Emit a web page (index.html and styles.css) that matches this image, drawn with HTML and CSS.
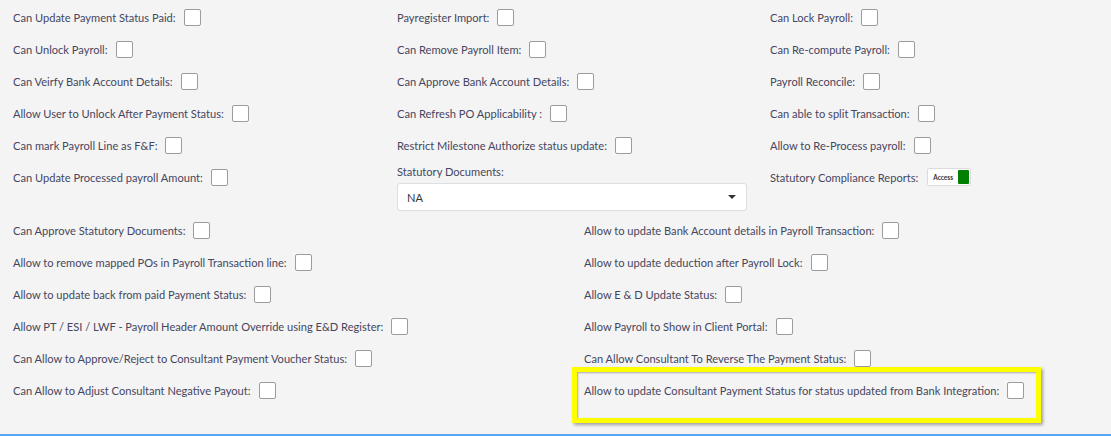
FILE: index.html
```html
<!DOCTYPE html>
<html lang="en">
  <head>
    <meta charset="UTF-8" />
    <meta name="viewport" content="width=device-width, initial-scale=1.0" />
    <title>Payroll Permissions</title>
    <link rel="stylesheet" href="styles.css">
  </head>
  <body>
    <div class="panel">
      <div class="grid3">
        <div class="field"><label>Can Update Payment Status Paid:</label><span class="chk"></span></div>
        <div class="field"><label>Payregister Import:</label><span class="chk"></span></div>
        <div class="field"><label>Can Lock Payroll:</label><span class="chk"></span></div>

        <div class="field"><label>Can Unlock Payroll:</label><span class="chk"></span></div>
        <div class="field"><label>Can Remove Payroll Item:</label><span class="chk"></span></div>
        <div class="field"><label>Can Re-compute Payroll:</label><span class="chk"></span></div>

        <div class="field"><label>Can Veirfy Bank Account Details:</label><span class="chk"></span></div>
        <div class="field"><label>Can Approve Bank Account Details:</label><span class="chk"></span></div>
        <div class="field"><label>Payroll Reconcile:</label><span class="chk"></span></div>

        <div class="field"><label>Allow User to Unlock After Payment Status:</label><span class="chk"></span></div>
        <div class="field"><label>Can Refresh PO Applicability :</label><span class="chk"></span></div>
        <div class="field"><label>Can able to split Transaction:</label><span class="chk"></span></div>

        <div class="field"><label>Can mark Payroll Line as F&amp;F:</label><span class="chk"></span></div>
        <div class="field"><label>Restrict Milestone Authorize status update:</label><span class="chk"></span></div>
        <div class="field"><label>Allow to Re-Process payroll:</label><span class="chk"></span></div>

        <div class="field"><label>Can Update Processed payroll Amount:</label><span class="chk"></span></div>
        <div class="select-field">
          <label>Statutory Documents:</label>
          <div class="select"><span>NA</span><span class="caret"></span></div>
        </div>
        <div class="field">
          <label>Statutory Compliance Reports:</label>
          <span class="toggle"><span class="toggle-text">Access</span><span class="toggle-knob"></span></span>
        </div>
      </div>

      <div class="grid2">
        <div class="field"><label>Can Approve Statutory Documents:</label><span class="chk"></span></div>
        <div class="field"><label>Allow to update Bank Account details in Payroll Transaction:</label><span class="chk"></span></div>

        <div class="field"><label>Allow to remove mapped POs in Payroll Transaction line:</label><span class="chk"></span></div>
        <div class="field"><label>Allow to update deduction after Payroll Lock:</label><span class="chk"></span></div>

        <div class="field"><label>Allow to update back from paid Payment Status:</label><span class="chk"></span></div>
        <div class="field"><label>Allow E &amp; D Update Status:</label><span class="chk"></span></div>

        <div class="field"><label>Allow PT / ESI / LWF - Payroll Header Amount Override using E&amp;D Register:</label><span class="chk"></span></div>
        <div class="field"><label>Allow Payroll to Show in Client Portal:</label><span class="chk"></span></div>

        <div class="field"><label>Can Allow to Approve/Reject to Consultant Payment Voucher Status:</label><span class="chk"></span></div>
        <div class="field"><label>Can Allow Consultant To Reverse The Payment Status:</label><span class="chk"></span></div>

        <div class="field"><label>Can Allow to Adjust Consultant Negative Payout:</label><span class="chk"></span></div>
        <div class="field highlighted"><label>Allow to update Consultant Payment Status for status updated from Bank Integration:</label><span class="chk"></span></div>
      </div>
    </div>
  </body>
</html>
```

FILE: styles.css
```css
* {
  margin: 0;
  padding: 0;
  box-sizing: border-box;
}
body {
  background-color: #f4f4f4;
  font-family: Lato, "Open Sans", sans-serif;
  font-size: 11.1px;
  color: #46465e;
}
.panel {
  height: 436px;
  padding: 1px 0 0 13px;
  border-bottom: 2px solid #5aa6f0;
}
.grid3 {
  display: grid;
  grid-template-columns: 384px 373px 1fr;
  align-items: start;
}
.grid2 {
  display: grid;
  grid-template-columns: 571px 1fr;
  align-items: start;
}
.field {
  display: flex;
  align-items: center;
  height: 32px;
  position: relative;
}
.field label {
  white-space: nowrap;
}
.chk {
  display: inline-block;
  width: 17px;
  height: 17px;
  margin-left: 8px;
  background-color: white;
  border: 1px solid #9c9c9c;
  border-radius: 2px;
}
.select-field {
  display: flex;
  flex-direction: column;
  padding-top: 4px;
  height: 53px;
}
.select-field label {
  line-height: 14px;
  margin-bottom: 4px;
}
.select {
  display: flex;
  align-items: center;
  justify-content: space-between;
  width: 350px;
  height: 28px;
  padding: 0 10px 0 9px;
  background-color: white;
  border: 1px solid #dedede;
  border-radius: 3px;
  color: #333;
}
.caret {
  width: 0;
  height: 0;
  border-left: 4px solid transparent;
  border-right: 4px solid transparent;
  border-top: 4px solid #333;
}
.toggle {
  display: inline-flex;
  align-items: center;
  justify-content: space-between;
  width: 44px;
  height: 18px;
  margin-left: 9px;
  padding: 0 1px 0 5px;
  background-color: white;
  border: 1px solid #dcdcdc;
  border-radius: 2px;
}
.toggle-text {
  font-size: 6.5px;
  font-weight: bold;
  color: #333;
}
.toggle-knob {
  width: 11px;
  height: 14px;
  background-color: #008000;
  border-radius: 1px;
}
.highlighted {
  justify-self: start;
}
.highlighted::before {
  content: "";
  box-sizing: border-box;
  position: absolute;
  top: -7px;
  left: -12px;
  right: -17px;
  height: 56px;
  border: 5px solid #ffff00;
  box-shadow: 2px 2px 3px rgba(0, 0, 0, 0.35), inset 1px 1px 2px rgba(0, 0, 0, 0.3);
  pointer-events: none;
}
```
